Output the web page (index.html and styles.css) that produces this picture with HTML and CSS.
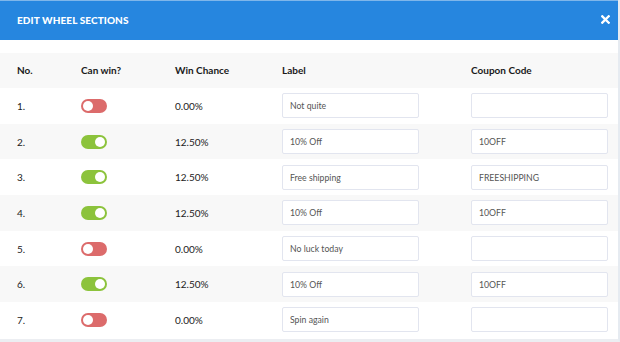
FILE: index.html
```html
<!DOCTYPE html>
<html lang="en">
<head>
  <meta charset="UTF-8">
  <title>Edit Wheel Sections</title>
  <meta name="viewport" content="width=device-width, initial-scale=1.0">
  <link rel="stylesheet" href="styles.css">
</head>
<body>
<div class="modal">
  <div class="modal-header">
    <span class="modal-title">EDIT WHEEL SECTIONS</span>
    <button class="close-btn" type="button" title="Close">
      <svg width="9" height="9" viewBox="0 0 9 9"><path d="M1.3 1.3 L7.7 7.7 M7.7 1.3 L1.3 7.7" stroke="#fff" stroke-width="2.3" stroke-linecap="square"/></svg>
    </button>
  </div>
  <div class="modal-body">
    <div class="row head">
      <span>No.</span>
      <span>Can win?</span>
      <span>Win Chance</span>
      <span>Label</span>
      <span>Coupon Code</span>
    </div>
    <div class="rows">
      <div class="row">
        <span>1.</span>
        <span><span class="toggle off"></span></span>
        <span>0.00%</span>
        <input class="field" type="text" value="Not quite">
        <input class="field" type="text" value="">
      </div>
      <div class="row">
        <span>2.</span>
        <span><span class="toggle on"></span></span>
        <span>12.50%</span>
        <input class="field" type="text" value="10% Off">
        <input class="field" type="text" value="10OFF">
      </div>
      <div class="row">
        <span>3.</span>
        <span><span class="toggle on"></span></span>
        <span>12.50%</span>
        <input class="field" type="text" value="Free shipping">
        <input class="field" type="text" value="FREESHIPPING">
      </div>
      <div class="row">
        <span>4.</span>
        <span><span class="toggle on"></span></span>
        <span>12.50%</span>
        <input class="field" type="text" value="10% Off">
        <input class="field" type="text" value="10OFF">
      </div>
      <div class="row">
        <span>5.</span>
        <span><span class="toggle off"></span></span>
        <span>0.00%</span>
        <input class="field" type="text" value="No luck today">
        <input class="field" type="text" value="">
      </div>
      <div class="row">
        <span>6.</span>
        <span><span class="toggle on"></span></span>
        <span>12.50%</span>
        <input class="field" type="text" value="10% Off">
        <input class="field" type="text" value="10OFF">
      </div>
      <div class="row">
        <span>7.</span>
        <span><span class="toggle off"></span></span>
        <span>0.00%</span>
        <input class="field" type="text" value="Spin again">
        <input class="field" type="text" value="">
      </div>
    </div>
  </div>
</div>
</body>
</html>
```

FILE: styles.css
```css
* { box-sizing: border-box; }
body {
  margin: 0;
  padding: 0;
  background: #fff;
  color: #222;
  font-family: 'Lato', 'Open Sans', sans-serif;
}
.modal {
  width: 620px;
  height: 342px;
  overflow: hidden;
  border-right: 2px solid #e6ebf1;
  border-bottom: 3px solid #eceef2;
  background: #fff;
}
.modal-header {
  height: 40px;
  background: #2686df;
  border-top: 1px solid #7fb6ea;
  display: flex;
  align-items: center;
  justify-content: space-between;
  padding: 0 8px 2px 17px;
}
.modal-title {
  color: #fff;
  font-weight: 900;
  font-size: 10px;
  letter-spacing: 0.01em;
}
.close-btn {
  background: none;
  border: none;
  padding: 0;
  width: 10px;
  height: 10px;
  display: flex;
  align-items: center;
  justify-content: center;
  cursor: pointer;
}
.modal-body {
  padding-top: 12.7px;
}
.row {
  display: grid;
  grid-template-columns: 64px 94px 107px 189px 138px;
  align-items: center;
  padding-left: 17px;
  height: 35.7px;
  font-size: 10px;
}
.row.head {
  height: 35.3px;
  background: #f8f8f8;
  font-weight: 700;
  color: #1a1a1a;
}
.rows .row:nth-child(even) { background: #f8f8f8; }
.toggle {
  display: block;
  position: relative;
  width: 26px;
  height: 14px;
  border-radius: 7px;
}
.toggle.off { background: #dc6b6b; }
.toggle.on { background: #8cc33c; }
.toggle::after {
  content: '';
  position: absolute;
  top: 2px;
  width: 10px;
  height: 10px;
  border-radius: 50%;
  background: #fff;
}
.toggle.off::after { left: 2px; }
.toggle.on::after { right: 2px; }
.field {
  width: 137px;
  height: 25px;
  border: 1px solid #e2e5ef;
  border-radius: 2px;
  background: #fff;
  padding: 0 7px;
  font-family: 'Lato', 'Open Sans', sans-serif;
  font-size: 8.7px;
  color: #555;
  outline: none;
}
```
